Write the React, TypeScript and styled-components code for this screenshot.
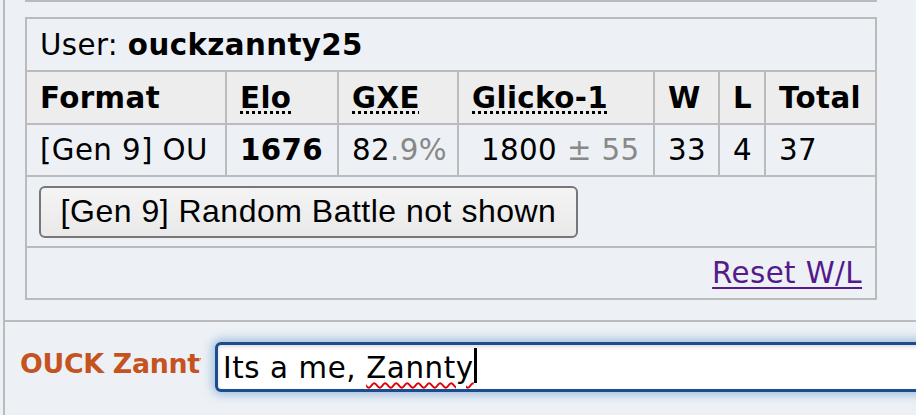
import React from "react";
import styled, { createGlobalStyle } from "styled-components";

const GlobalStyle = createGlobalStyle`
  html, body {
    margin: 0;
    padding: 0;
  }
  body {
    background: #edf1f5;
    font-family: "DejaVu Sans", Verdana, sans-serif;
    overflow: hidden;
  }
  * {
    box-sizing: border-box;
  }
`;

const Page = styled.div`
  width: 916px;
  height: 415px;
  padding-left: 3px;
  overflow: hidden;
`;

const Room = styled.div`
  height: 100%;
  border-left: 2px solid #bbbbbb;
  display: flex;
  flex-direction: column;
`;

const LadderPane = styled.div`
  flex: none;
  height: 320px;
  padding-left: 20px;
`;

const PrevEdge = styled.div`
  width: 852px;
  height: 2px;
  background: #bbbbbb;
  margin-bottom: 15px;
`;

const Ladder = styled.table`
  width: 852px;
  table-layout: fixed;
  border-collapse: separate;
  border-spacing: 0;
  border-top: 2px solid #bbbbbb;
  border-left: 2px solid #bbbbbb;
  font-size: 29.3px;
  letter-spacing: 0.4px;
  color: #000;
`;

const Cell = styled.td<{ $h: number; $align?: string; $indent?: number }>`
  height: ${(p) => p.$h}px;
  padding: 0 13px 0 ${(p) => 13 + (p.$indent ?? 0)}px;
  border-right: 2px solid #bbbbbb;
  border-bottom: 2px solid #bbbbbb;
  vertical-align: middle;
  white-space: nowrap;
  text-align: ${(p) => p.$align ?? "left"};
`;

const HeadCell = styled.th`
  height: 53px;
  padding: 0 13px;
  border-right: 2px solid #bbbbbb;
  border-bottom: 2px solid #bbbbbb;
  background: #ededed;
  font-weight: bold;
  text-align: left;
  vertical-align: middle;
  white-space: nowrap;
`;

const Hint = styled.abbr`
  text-decoration: underline dotted;
  text-decoration-thickness: 3px;
  text-underline-offset: 3px;
  cursor: help;
`;

const Dim = styled.span`
  color: #888888;
`;

const ToggleButton = styled.button`
  width: 539px;
  height: 52px;
  padding: 0;
  border: 2px solid #777777;
  border-radius: 6px;
  background: linear-gradient(#f4f4f4, #e9e9e9);
  font-family: "Liberation Sans", Arial, sans-serif;
  font-size: 32px;
  letter-spacing: 0.5px;
  color: #000;
  cursor: pointer;
`;

const ResetLink = styled.a`
  color: #551a8b;
  text-decoration: underline;
  text-decoration-thickness: 2px;
  text-underline-offset: 4px;
`;

const ChatBar = styled.div`
  flex: 1;
  display: flex;
  align-items: flex-start;
  padding: 20px 0 0 15px;
  border-top: 2px solid #bbbbbb;
`;

const Name = styled.span`
  flex: none;
  width: 181px;
  margin-top: 6px;
  overflow: hidden;
  white-space: nowrap;
  font-size: 26.8px;
  line-height: 31px;
  letter-spacing: -0.3px;
  font-weight: bold;
  color: #c4531f;
`;

const Textbox = styled.div`
  flex: none;
  width: 720px;
  height: 50px;
  margin-left: 14px;
  padding: 2px 0 0 5px;
  border: 3px solid #1b4d8c;
  border-radius: 6px;
  background: #fff;
  box-shadow: 0 0 10px 3px rgba(102, 150, 205, 0.55),
    inset 0 2px 4px #dcdcdc;
  font-size: 29.3px;
  line-height: 42px;
  letter-spacing: 0.6px;
  white-space: nowrap;
  color: #000;
`;

const Misspelt = styled.span`
  text-decoration: underline wavy #e00000;
  text-decoration-thickness: 2px;
  text-underline-offset: 4px;
`;

const Caret = styled.span`
  display: inline-block;
  width: 3px;
  height: 35px;
  background: #000;
  vertical-align: -5px;
`;

const widths = [200, 112, 120, 196, 65, 46, 111];

export default function App() {
  return (
    <>
      <GlobalStyle />
      <Page>
        <Room>
          <LadderPane>
            <PrevEdge />
            <Ladder>
              <colgroup>
                {widths.map((w, i) => (
                  <col key={i} style={{ width: w }} />
                ))}
              </colgroup>
              <tbody>
                <tr>
                  <Cell $h={53} colSpan={7}>
                    User: <strong>ouckzannty25</strong>
                  </Cell>
                </tr>
                <tr>
                  <HeadCell>Format</HeadCell>
                  <HeadCell>
                    <Hint title="Elo rating">Elo</Hint>
                  </HeadCell>
                  <HeadCell>
                    <Hint title="user's percentage chance of winning a random battle">GXE</Hint>
                  </HeadCell>
                  <HeadCell>
                    <Hint title="Glicko-1 rating system: rating±deviation">Glicko-1</Hint>
                  </HeadCell>
                  <HeadCell>W</HeadCell>
                  <HeadCell>L</HeadCell>
                  <HeadCell>Total</HeadCell>
                </tr>
                <tr>
                  <Cell $h={52}>[Gen 9] OU</Cell>
                  <Cell $h={52}>
                    <strong>1676</strong>
                  </Cell>
                  <Cell $h={52}>
                    82<Dim>.9%</Dim>
                  </Cell>
                  <Cell $h={52} $indent={9}>
                    1800 <Dim>± 55</Dim>
                  </Cell>
                  <Cell $h={52}>33</Cell>
                  <Cell $h={52}>4</Cell>
                  <Cell $h={52}>37</Cell>
                </tr>
                <tr>
                  <Cell $h={71} $indent={-1} colSpan={7}>
                    <ToggleButton>[Gen 9] Random Battle not shown</ToggleButton>
                  </Cell>
                </tr>
                <tr>
                  <Cell $h={52} $align="right" colSpan={7}>
                    <ResetLink href="#">Reset W/L</ResetLink>
                  </Cell>
                </tr>
              </tbody>
            </Ladder>
          </LadderPane>
          <ChatBar>
            <Name>OUCK Zannty</Name>
            <Textbox>
              Its a me, <Misspelt>Zannty</Misspelt>
              <Caret />
            </Textbox>
          </ChatBar>
        </Room>
      </Page>
    </>
  );
}
